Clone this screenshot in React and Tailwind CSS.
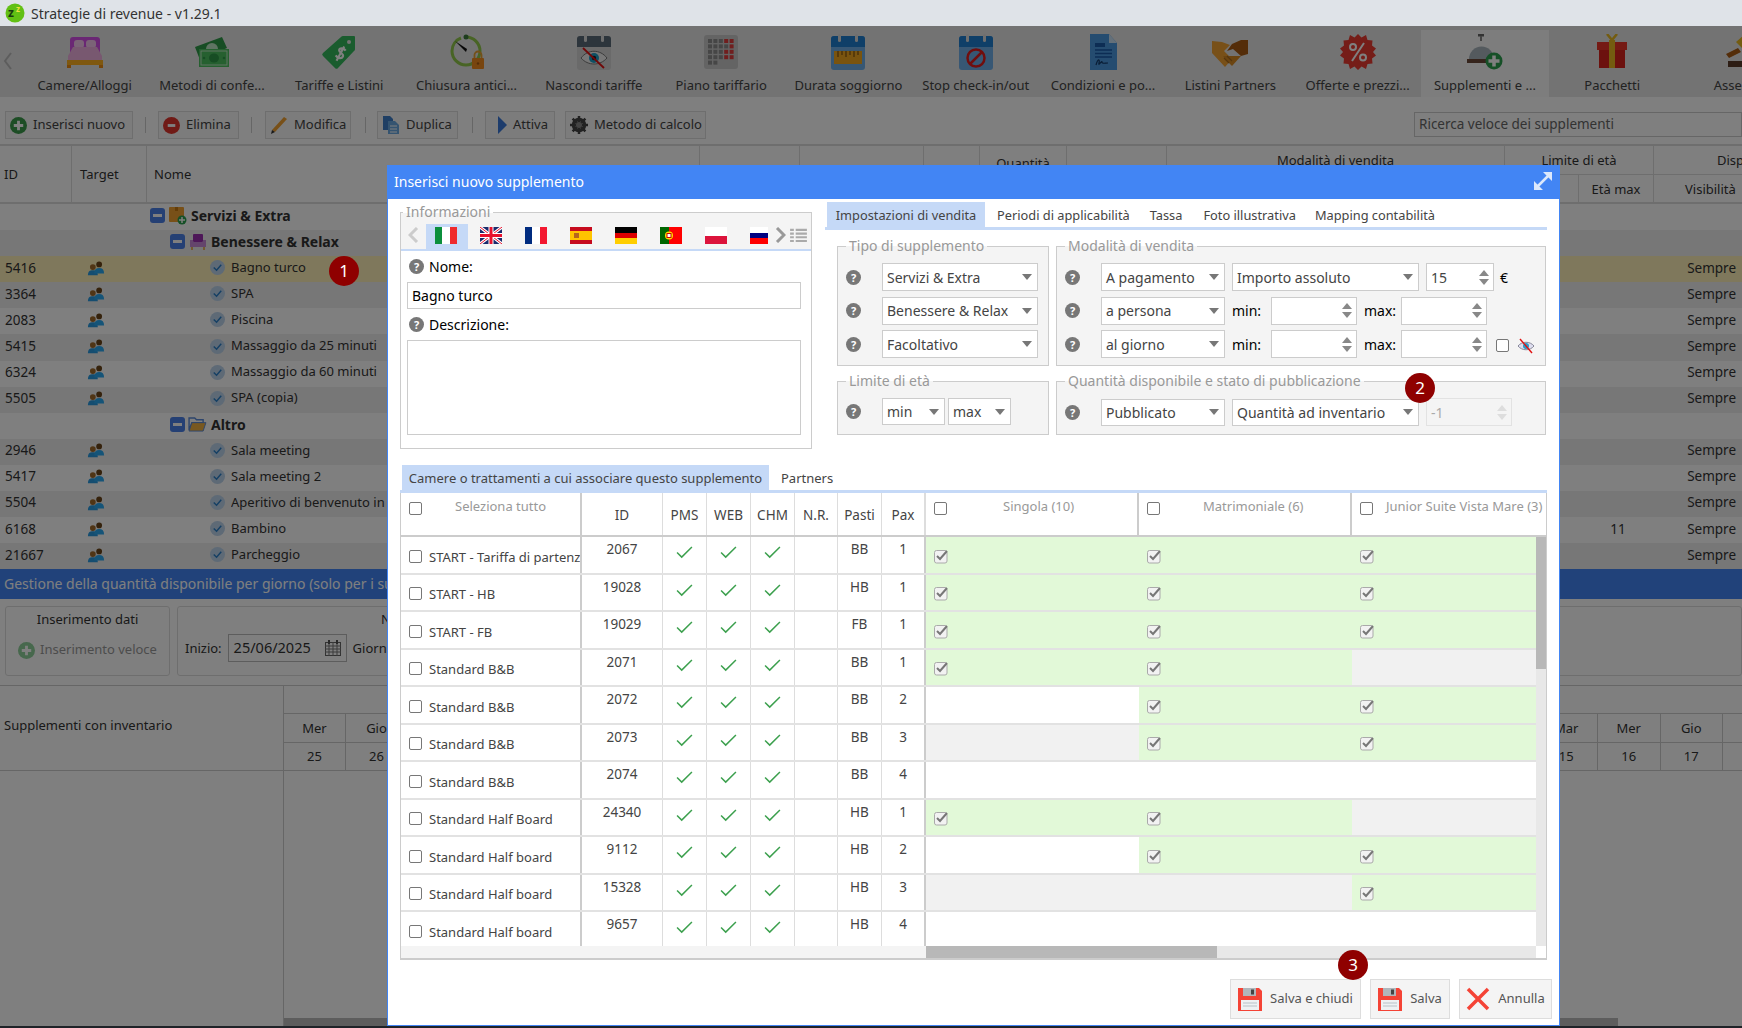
import React from 'react';

const FONT = "font-['Noto_Sans','Liberation_Sans',sans-serif]";

// toolbar icons, drawn in their real colours: the page overlay darkens them
const Bed = () => (
  <svg viewBox="0 0 36 36" className="w-9 h-9">
    <path d="M3 6a3 3 0 0 1 3-3h24a3 3 0 0 1 3 3v16H3z" fill="#d44fe8" />
    <rect x="7" y="6" width="10" height="8" rx="3" fill="#f6c6ee" />
    <rect x="19" y="6" width="10" height="8" rx="3" fill="#f6c6ee" />
    <path d="M6 13h24l5 9v6H1v-6z" fill="#f0b0e0" />
    <path d="M0 26h36v5H0z" fill="#ffb020" />
    <path d="M0 31h4v3H0zM32 31h4v3h-4z" fill="#ec8a10" />
  </svg>
);
const Money = () => (
  <svg viewBox="0 0 36 36" className="w-9 h-9">
    <path d="M1 13L28 3l5 11-27 12z" fill="#2f9a48" />
    <circle cx="18" cy="15" r="6" fill="#bfe8c6" />
    <rect x="5" y="15" width="30" height="18" fill="#4cc060" />
    <rect x="7" y="17" width="26" height="14" fill="none" stroke="#bfe8c6" strokeWidth="1" />
    <ellipse cx="20" cy="24" rx="5" ry="4.500" fill="#2f9a48" />
    <circle cx="10" cy="24" r="1.300" fill="#2f9a48" />
    <circle cx="30" cy="24" r="1.300" fill="#2f9a48" />
  </svg>
);
const Tag = () => (
  <svg viewBox="0 0 36 36" className="w-9 h-9">
    <path d="M22 2h11a1 1 0 0 1 1 1v12a2 2 0 0 1-1 2L17 34a2 2 0 0 1-3 0L2 22a2 2 0 0 1 0-3L20 3a3 3 0 0 1 2-1z" fill="#35b85c" />
    <circle cx="28" cy="8" r="2" fill="#e6e6e6" />
    <path d="M23 14c-3-2-7 0-6 2.500s6 1 6 4-4 4-7 2M20 11l-1 16" fill="none" stroke="#fff" strokeWidth="2.200" transform="rotate(25 18 19)" />
  </svg>
);
const Timer = () => (
  <svg viewBox="0 0 36 36" className="w-9 h-9">
    <path d="M17 3a14 14 0 1 1-14 14" fill="none" stroke="#90c84a" strokeWidth="3" />
    <path d="M3 17a14 14 0 0 1 9-13" fill="none" stroke="#90c84a" strokeWidth="3" />
    <circle cx="17" cy="3" r="2.500" fill="#3c7a3c" />
    <path d="M6 7l11 11 1-3z" fill="#111" />
    <rect x="23" y="24" width="12" height="11" rx="1" fill="#f08a1e" />
    <path d="M25.500 24v-3a3.500 3.500 0 0 1 7 0v3" fill="none" stroke="#e8a030" strokeWidth="1.800" />
    <circle cx="29" cy="29.500" r="1.200" fill="#a85a12" />
  </svg>
);
const CalHead = ({ color }) => (
  <>
    <path d="M1 5a3 3 0 0 1 3-3h28a3 3 0 0 1 3 3v8H1z" fill={color} />
    <rect x="8" y="0" width="3" height="8" rx="1.500" fill="#ddd" />
    <rect x="25" y="0" width="3" height="8" rx="1.500" fill="#ddd" />
  </>
);
const EyeOff = () => (
  <svg viewBox="0 0 36 36" className="w-9 h-9">
    <rect x="1" y="2" width="34" height="34" rx="3" fill="#d4d4d4" />
    <CalHead color="#5a6a78" />
    <path d="M5 24c7-9 19-9 26 0-7 8-19 8-26 0z" fill="#eee" stroke="#777" />
    <circle cx="18" cy="24" r="5" fill="#1ea0c8" />
    <circle cx="18" cy="24" r="2.200" fill="#123" />
    <path d="M7 14l21 20" stroke="#e01010" strokeWidth="1.800" />
  </svg>
);
const Grid = () => {
  const red = [3, 4, 9, 13, 14, 18, 19];
  return (
    <svg viewBox="0 0 36 36" className="w-9 h-9">
      <rect x="1" y="1" width="34" height="34" rx="3" fill="#c8c8c8" />
      {Array.from({ length: 22 }).map((_, i) => (
        <rect key={i} x={5 + (i % 5) * 5.400} y={5 + Math.floor(i / 5) * 5.400} width="4" height="4" fill={red.includes(i) ? '#e03c3c' : '#8c8c8c'} />
      ))}
    </svg>
  );
};
const CalBar = () => (
  <svg viewBox="0 0 36 36" className="w-9 h-9">
    <rect x="1" y="2" width="34" height="34" rx="3" fill="#6eaee8" />
    <CalHead color="#1f7fd0" />
    <rect x="4" y="17" width="28" height="13" fill="#f5a81e" />
    <path d="M8 17v6M12 17v4M16 17v6M20 17v4M24 17v6M28 17v4" stroke="#8a5a10" strokeWidth="1.300" />
  </svg>
);
const CalStop = () => (
  <svg viewBox="0 0 36 36" className="w-9 h-9">
    <rect x="1" y="2" width="34" height="34" rx="3" fill="#6eaee8" />
    <CalHead color="#1f7fd0" />
    <circle cx="18" cy="24" r="8.500" fill="none" stroke="#e01c1c" strokeWidth="2.500" />
    <path d="M12 30l12-12" stroke="#e01c1c" strokeWidth="2.500" />
  </svg>
);
const Doc = () => (
  <svg viewBox="0 0 36 36" className="w-9 h-9">
    <path d="M5 0h19l8 9v27H5z" fill="#4a98e0" />
    <path d="M24 0l8 9h-8z" fill="#c8e0f5" />
    <path d="M10 9h10v4H10z" fill="#1a5aa8" />
    <path d="M10 16h17M10 19.500h17M10 23h17" stroke="#1a5aa8" strokeWidth="1.600" />
    <path d="M11 31c2-7 4-6 3-2s3-3 3-1 3 1 6 1" fill="none" stroke="#123a6a" strokeWidth="1.200" />
  </svg>
);
const Hands = () => (
  <svg viewBox="0 0 36 36" className="w-9 h-9">
    <path d="M0 7l10 1 8 3-6 6 5 5 3 3-7 8-13-14z" fill="#f0a030" />
    <path d="M36 6v14l-7 2-8-7-6 2 5-7 9-4z" fill="#a85a12" />
    <path d="M29 22l-9 10-3-3-6-7" fill="#d88a22" />
    <path d="M12 24l5 5M15 22l5 5" stroke="#a86a1c" strokeWidth="1.200" />
  </svg>
);
const Percent = () => (
  <svg viewBox="0 0 36 36" className="w-9 h-9">
    <path d="M18 0l3.500 3.500L26 1l1.500 5 5 .5L32 11.500l4 3-3 3.500 3 3.500-4 3 .5 5-5 .5L26 35l-4.500-2.500L18 36l-3.500-3.500L10 35l-1.500-5-5-.5.5-5-4-3L3 18 0 14.500l4-3-.5-5 5-.5L10 1l4.500 2.500z" fill="#ea3a30" />
    <circle cx="13" cy="13" r="3" fill="none" stroke="#fff" strokeWidth="2" />
    <circle cx="23" cy="23.500" r="3" fill="none" stroke="#fff" strokeWidth="2" />
    <path d="M24 9L12 27" stroke="#fff" strokeWidth="2" />
  </svg>
);
const Bell = () => (
  <svg viewBox="0 0 36 36" className="w-9 h-9">
    <rect x="11" y="0" width="6" height="2.500" fill="#666" />
    <rect x="13" y="2" width="2" height="5" fill="#888" />
    <path d="M2 25a12.500 12.500 0 0 1 25 0z" fill="#a8b4bc" />
    <path d="M0 25h30v4H0z" fill="#6a4838" />
    <circle cx="27" cy="27" r="8.500" fill="#2ca04f" />
    <path d="M27 21.500v11M21.500 27h11" stroke="#fff" strokeWidth="3.500" />
  </svg>
);
const Gift = () => (
  <svg viewBox="0 0 36 36" className="w-9 h-9">
    <path d="M13 0l5 6 5-6" fill="none" stroke="#e8b820" strokeWidth="2.500" />
    <rect x="3" y="8" width="30" height="8" fill="#ea3428" />
    <rect x="5" y="16" width="26" height="18" fill="#d8231c" />
    <rect x="15" y="6" width="6" height="28" fill="#e8b820" />
  </svg>
);
const Gavel = () => (
  <svg viewBox="0 0 36 36" className="w-9 h-9">
    <path d="M14 8l8-7 7 7-8 7z" fill="#e8b820" />
    <path d="M4 20l12-6 3 4-12 6z" fill="#a85a12" />
    <rect x="6" y="27" width="24" height="6" fill="#5a3a28" />
  </svg>
);

const PlusRound = ({ size = 'w-[17px] h-[17px]', color = '#3a9a4a' }) => (
  <svg viewBox="0 0 18 18" className={size}>
    <circle cx="9" cy="9" r="9" fill={color} />
    <path d="M9 4v10M4 9h10" stroke="#fff" strokeWidth="3" />
  </svg>
);
const MinusRound = () => (
  <svg viewBox="0 0 18 18" className="w-[17px] h-[17px]">
    <circle cx="9" cy="9" r="9" fill="#e0342c" />
    <rect x="5" y="7.500" width="8" height="3" fill="#fff" />
  </svg>
);
const Pencil = () => (
  <svg viewBox="0 0 18 18" className="w-[18px] h-[18px]">
    <path d="M14 1l3 2L5 16l-3-2z" fill="#f0a030" />
    <path d="M2 14l3 2-4 2z" fill="#333" />
  </svg>
);
const Duplicate = () => (
  <svg viewBox="0 0 18 18" className="w-[18px] h-[18px]">
    <path d="M1 0h7l3 3v11H1z" fill="#3f7fc8" />
    <path d="M6 5h7l4 4v9H6z" fill="#6aa8e0" />
    <path d="M8 10h7M8 13h7M8 16h7" stroke="#fff" strokeWidth="1" />
  </svg>
);
const Gear = () => (
  <svg viewBox="0 0 18 18" className="w-[18px] h-[18px]">
    <circle cx="9" cy="9" r="5.500" fill="none" stroke="#444" strokeWidth="3.500" />
    <path d="M9 0v18M0 9h18M2.600 2.600l12.800 12.800M15.400 2.600L2.600 15.400" stroke="#444" strokeWidth="2.500" />
    <circle cx="9" cy="9" r="3" fill="#888" />
  </svg>
);
const Users = () => (
  <svg viewBox="0 0 20 16" className="w-[18px] h-[16px]">
    <circle cx="6.500" cy="7" r="3.200" fill="#a06a2a" />
    <path d="M1 16c0-4 2-5.500 5.500-5.500S12 12 12 16z" fill="#2a9ae0" />
    <circle cx="13.500" cy="4" r="3.200" fill="#6a4418" />
    <path d="M8 14c0-4 2-6 5.500-6S19 10 19 14z" fill="#2aa8f0" />
  </svg>
);
const RoundCheck = () => (
  <svg viewBox="0 0 16 16" className="w-[15px] h-[15px]">
    <circle cx="8" cy="8" r="8" fill="#bcd4ec" />
    <path d="M4 8l3 3 5-6" fill="none" stroke="#2a7fc8" strokeWidth="1.500" />
  </svg>
);
const TreeMinus = () => (
  <div className="w-[15px] h-[15px] rounded-[3px] bg-[#4a80e8] flex items-center justify-center">
    <div className="w-[9px] h-[3px] bg-white" />
  </div>
);
const Box = () => (
  <svg viewBox="0 0 18 18" className="w-[18px] h-[18px]">
    <rect x="0" y="0" width="15" height="15" rx="1" fill="#f0a030" />
    <rect x="6" y="0" width="3" height="4" fill="#c87a10" />
    <circle cx="13" cy="13" r="4.500" fill="#2ca04f" />
    <path d="M13 10v6M10 13h6" stroke="#fff" strokeWidth="1.500" />
  </svg>
);
const Armchair = () => (
  <svg viewBox="0 0 16 16" className="w-4 h-4">
    <rect x="3" y="0" width="10" height="8" rx="1" fill="#9a2fb0" />
    <rect x="0" y="6" width="3" height="7" fill="#c88ad8" />
    <rect x="13" y="6" width="3" height="7" fill="#c88ad8" />
    <rect x="2" y="8" width="12" height="5" fill="#c88ad8" />
    <path d="M2 13v3M14 13v3" stroke="#e8a030" strokeWidth="1.500" />
  </svg>
);
const Folder = () => (
  <svg viewBox="0 0 20 16" className="w-[19px] h-[15px]">
    <path d="M1 1h6l2 2h7v3H4L1 14z" fill="none" stroke="#5a8ad8" strokeWidth="1.500" />
    <path d="M4 6h15l-3 9H1z" fill="#f0b040" stroke="#5a8ad8" />
  </svg>
);
const Help = () => (
  <div className="w-[15px] h-[15px] shrink-0 rounded-full bg-[#777] text-white text-[11px] leading-[15px] font-bold text-center">?</div>
);
const Floppy = () => (
  <svg viewBox="0 0 24 24" className="w-6 h-6">
    <path d="M0 1h21l3 3v20H0z" fill="#f44336" />
    <rect x="5" y="1" width="13" height="8" fill="#b0b6bb" />
    <rect x="13" y="2.500" width="3" height="5" fill="#444" />
    <rect x="3" y="13" width="18" height="10" fill="#eef1f3" />
    <path d="M5 16h14M5 19h14" stroke="#b8c2c8" strokeWidth="1.200" />
  </svg>
);
const Tick = () => (
  <svg viewBox="0 0 18 14" className="w-[17px] h-[13px]">
    <path d="M1 7l5 5L17 1" fill="none" stroke="#3ca04e" strokeWidth="1.600" />
  </svg>
);
const CheckedBox = () => (
  <svg viewBox="0 0 15 15" className="w-[15px] h-[15px]">
    <rect x="0.500" y="1.500" width="12.500" height="12.500" rx="2" fill="#f2f2f2" stroke="#aaa" />
    <path d="M3 7l3 3 7-8" fill="none" stroke="#777" strokeWidth="2" />
  </svg>
);

const Spin = ({ dim }) => (
  <div className="flex flex-col gap-[3px] items-center">
    <div className={`w-0 h-0 border-x-[5px] border-x-transparent border-b-[6px] ${dim ? 'border-b-[#ddd]' : 'border-b-[#888]'}`} />
    <div className={`w-0 h-0 border-x-[5px] border-x-transparent border-t-[6px] ${dim ? 'border-t-[#ddd]' : 'border-t-[#888]'}`} />
  </div>
);
const Caret = () => <div className="w-0 h-0 border-x-[5px] border-x-transparent border-t-[6px] border-t-[#777]" />;

const Select = ({ w, h = 'h-[28px]', children }) => (
  <div className={`${w} ${h} shrink-0 bg-white border border-[#ccc] flex items-center justify-between pl-[4px] pr-[5px] text-[14px] text-[#444]`}>
    <span className="whitespace-nowrap">{children}</span>
    <Caret />
  </div>
);
const Num = ({ w, value, disabled }) => (
  <div className={`${w} h-[28px] shrink-0 border flex items-center justify-between pl-[4px] pr-[4px] text-[14px] ${disabled ? 'bg-[#f4f4f4] border-[#e2e2e2] text-[#aaa]' : 'bg-white border-[#ccc] text-[#444]'}`}>
    <span>{value}</span>
    <Spin dim={disabled} />
  </div>
);
const Box14 = () => <div className="w-[13px] h-[13px] shrink-0 rounded-[2px] border border-[#777] bg-white" />;

const Legend = ({ children, className = '' }) => <legend className={`px-[3px] text-[14px] leading-[16px] text-[#999] ${className}`}>{children}</legend>;

const Badge = ({ n, pos }) => (
  <div className={`absolute ${pos} w-[30px] h-[30px] rounded-full bg-[#8f0000] text-white text-[17px] leading-[30px] text-center z-30`}>{n}</div>
);

const tools = [
  ['Camere/Alloggi', Bed], ['Metodi di confe...', Money], ['Tariffe e Listini', Tag], ['Chiusura antici...', Timer],
  ['Nascondi tariffe', EyeOff], ['Piano tariffario', Grid], ['Durata soggiorno', CalBar], ['Stop check-in/out', CalStop],
  ['Condizioni e po...', Doc], ['Listini Partners', Hands], ['Offerte e prezzi...', Percent], ['Supplementi e ...', Bell, true],
  ['Pacchetti', Gift], ['Assegna', Gavel],
];

const rows = [
  { group: 'Servizi & Extra', level: 1 },
  { group: 'Benessere & Relax', level: 2 },
  { id: '5416', name: 'Bagno turco', hl: true },
  { id: '3364', name: 'SPA' },
  { id: '2083', name: 'Piscina' },
  { id: '5415', name: 'Massaggio da 25 minuti' },
  { id: '6324', name: 'Massaggio da 60 minuti' },
  { id: '5505', name: 'SPA (copia)' },
  { group: 'Altro', level: 3 },
  { id: '2946', name: 'Sala meeting' },
  { id: '5417', name: 'Sala meeting 2' },
  { id: '5504', name: 'Aperitivo di benvenuto in camera' },
  { id: '6168', name: 'Bambino', max: '11' },
  { id: '21667', name: 'Parcheggio' },
];

const flags = [
  <div key="it" className="flex w-[22px] h-[17px]"><div className="flex-1 bg-[#0b8f3c]" /><div className="flex-1 bg-white" /><div className="flex-1 bg-[#ef2a2d]" /></div>,
  <svg key="uk" viewBox="0 0 22 17" className="w-[22px] h-[17px]">
    <rect width="22" height="17" fill="#1a2a6c" />
    <path d="M0 0l22 17M22 0L0 17" stroke="#fff" strokeWidth="3" />
    <path d="M0 0l22 17M22 0L0 17" stroke="#e8112d" strokeWidth="1" />
    <path d="M11 0v17M0 8.500h22" stroke="#fff" strokeWidth="5" />
    <path d="M11 0v17M0 8.500h22" stroke="#e8112d" strokeWidth="3" />
  </svg>,
  <div key="fr" className="flex w-[22px] h-[17px]"><div className="flex-1 bg-[#002b7f]" /><div className="flex-1 bg-white" /><div className="flex-1 bg-[#f31830]" /></div>,
  <div key="es" className="flex flex-col w-[22px] h-[17px]"><div className="h-1 bg-[#c60b1e]" /><div className="flex-1 bg-[#ffc400] pl-1 pt-[2px]"><div className="w-[5px] h-[5px] bg-[#b5651d]" /></div><div className="h-1 bg-[#c60b1e]" /></div>,
  <div key="de" className="flex flex-col w-[22px] h-[17px]"><div className="flex-1 bg-black" /><div className="flex-1 bg-[#dd0000]" /><div className="flex-1 bg-[#ffce00]" /></div>,
  <svg key="pt" viewBox="0 0 22 17" className="w-[22px] h-[17px]">
    <rect width="9" height="17" fill="#006600" />
    <rect x="9" width="13" height="17" fill="#ff0000" />
    <circle cx="9" cy="8.500" r="4" fill="#ffe000" />
    <rect x="7" y="6.500" width="4" height="4" fill="#fff" stroke="#c00" />
  </svg>,
  <div key="pl" className="flex flex-col w-[22px] h-[17px]"><div className="flex-1 bg-white" /><div className="flex-1 bg-[#dc143c]" /></div>,
  <div key="ru" className="flex flex-col w-[18px] h-[17px]"><div className="flex-1 bg-white" /><div className="flex-1 bg-[#000080]" /><div className="flex-1 bg-[#ff0000]" /></div>,
];

const rooms = [
  ['START - Tariffa di partenza', '2067', 'BB', '1', true, true, true],
  ['START - HB', '19028', 'HB', '1', true, true, true],
  ['START - FB', '19029', 'FB', '1', true, true, true],
  ['Standard B&B', '2071', 'BB', '1', true, true, false],
  ['Standard B&B', '2072', 'BB', '2', false, true, true],
  ['Standard B&B', '2073', 'BB', '3', false, true, true],
  ['Standard B&B', '2074', 'BB', '4', false, false, false],
  ['Standard Half Board', '24340', 'HB', '1', true, true, false],
  ['Standard Half board', '9112', 'HB', '2', false, true, true],
  ['Standard Half board', '15328', 'HB', '3', false, false, true],
  ['Standard Half board', '9657', 'HB', '4', false, false, false],
];

const roomCols = 'grid grid-cols-[181px_81px_44px_44px_44px_43px_44px_44px_213px_213px_185px]';

const Page = () => (
  <div className="h-[1000px] bg-white text-[#333] text-[13px] flex flex-col overflow-hidden">
    <div className="h-[71px] shrink-0 bg-[#e6e6e6] flex pl-[3px] pt-1 overflow-hidden">
      <svg viewBox="0 0 10 18" className="w-[10px] h-[18px] mt-[22px] mr-[8px] shrink-0"><path d="M8 1L2 9l6 8" fill="none" stroke="#bbb" strokeWidth="2" /></svg>
      {tools.map(([label, Icon, active]) => (
        <div key={label} className={`w-[127.300px] shrink-0 flex flex-col items-center pt-1 ${active ? 'bg-[#fafafa]' : ''}`}>
          <Icon />
          <div className="mt-[6px] text-[13px] leading-[18px] whitespace-nowrap text-[#444]">{label}</div>
        </div>
      ))}
    </div>
    <div className="h-[49px] shrink-0 flex items-start pl-[5px] pt-[14px] gap-[12px] border-b-2 border-[#ddd]">
      <ActionBtn w="w-[128px]" icon={<PlusRound />} label="Inserisci nuovo" />
      <div className="w-px h-[16px] mt-[6px] bg-[#ccc]" />
      <ActionBtn w="w-[81px]" icon={<MinusRound />} label="Elimina" />
      <div className="w-px h-[16px] mt-[6px] bg-[#ccc]" />
      <ActionBtn w="w-[86px]" icon={<Pencil />} label="Modifica" className="ml-[1px]" />
      <div className="w-px h-[16px] mt-[6px] bg-[#ccc] ml-[2px]" />
      <ActionBtn w="w-[81px]" icon={<Duplicate />} label="Duplica" className="-ml-[1px]" />
      <div className="w-px h-[16px] mt-[6px] bg-[#ccc] ml-[2px]" />
      <ActionBtn w="w-[70px]" icon={<div className="w-0 h-0 ml-2 border-y-[9px] border-y-transparent border-l-[9px] border-l-[#3a78d8]" />} label="Attiva" />
      <ActionBtn w="w-[141px]" icon={<Gear />} label="Metodo di calcolo" className="-ml-[2px]" />
      <div className="ml-auto w-[328px] h-[25px] mt-[1px] border border-[#ccc] bg-white pl-1 text-[13.500px] leading-[23px] text-[#666] whitespace-nowrap overflow-hidden">Ricerca veloce dei supplementi</div>
    </div>
    <div className="h-[58px] shrink-0 grid grid-cols-[72px_75px_553px_100px_124px_56px_87px_100px_338px_74px_75px_88px] border-b-2 border-[#ddd] text-[13px]">
      <div className="pl-1 flex items-center border-r border-[#ddd]">ID</div>
      <div className="pl-2 flex items-center border-r border-[#ddd]">Target</div>
      <div className="pl-[7px] flex items-center border-r border-[#ddd]">Nome</div>
      <div className="border-r border-[#ddd]" />
      <div className="border-r border-[#ddd]" />
      <div className="border-r border-[#ddd]" />
      <div className="border-r border-[#ddd] text-center pt-[8px] leading-[18px]">Quantità</div>
      <div className="border-r border-[#ddd]" />
      <div className="border-r border-[#ddd] text-center pt-[5px] leading-[18px]">Modalità di vendita</div>
      <div className="col-span-2 border-r border-[#ddd] flex flex-col">
        <div className="h-[29px] text-center leading-[28px] border-b border-[#ddd]">Limite di età</div>
        <div className="flex-1 flex">
          <div className="w-[74px] border-r border-[#ddd]" />
          <div className="flex-1 text-center leading-[28px]">Età max</div>
        </div>
      </div>
      <div className="flex flex-col">
        <div className="h-[29px] pl-[63px] leading-[28px] border-b border-[#ddd] whitespace-nowrap overflow-hidden">Disponibilità</div>
        <div className="flex-1 pl-[31px] leading-[28px]">Visibilità</div>
      </div>
    </div>
    <div>
      {rows.map((r, i) => (
        <div key={i} className={`h-[26.100px] flex items-center pb-[3px] text-[13px] ${r.hl ? 'bg-[#fef0b8]' : i % 2 ? 'bg-[#eeeeee]' : 'bg-white'}`}>
          {r.group ? (
            <div className={`flex items-center font-bold text-[14px] ${r.level === 1 ? 'ml-[150px]' : 'ml-[170px]'}`}>
              <TreeMinus />
              <div className={`flex justify-center ${r.level === 1 ? 'ml-[4px] w-[18px] mr-[4px]' : 'ml-[3px] w-[19px] mr-[4px]'}`}>
                {r.level === 1 ? <Box /> : r.level === 2 ? <Armchair /> : <Folder />}
              </div>
              <span>{r.group}</span>
            </div>
          ) : (
            <>
              <div className="w-[87px] pl-[5px] text-[13.500px]">{r.id}</div>
              <Users />
              <div className="ml-[105px] mr-[6px]"><RoundCheck /></div>
              <div className="whitespace-nowrap w-[300px] overflow-hidden">{r.name}</div>
              <div className="ml-[1049px] w-[76px] text-center text-[13.500px]">{r.max}</div>
              <div className="ml-auto pr-[6px] text-[13.500px]">Sempre</div>
            </>
          )}
        </div>
      ))}
    </div>
    <div className="h-[30px] shrink-0 bg-[#4285f4] text-white text-[14px] leading-[30px] pl-1 whitespace-nowrap">Gestione della quantità disponibile per giorno (solo per i supplementi con inventario)</div>
    <div className="h-[86px] shrink-0 flex gap-[7px] pl-[5px] pt-[7px]">
      <div className="w-[165px] h-[70px] border border-[#ddd] rounded-[3px] flex flex-col items-center">
        <div className="mt-[2px] leading-[20px] text-[#333]">Inserimento dati</div>
        <div className="mt-[11px] flex items-center gap-[5px] text-[#999]"><PlusRound color="#8fd09a" />Inserimento veloce</div>
      </div>
      <div className="flex-1 h-[70px] border border-[#ddd] rounded-[3px] pl-[7px]">
        <div className="mt-[2px] leading-[20px] pl-[196px]">Nuova</div>
        <div className="mt-[5px] flex items-center gap-[6px]">
          Inizio:
          <div className="w-[119px] h-[28px] border border-[#bbb] flex items-center justify-between px-[5px] text-[14.500px]">
            25/06/2025
            <svg viewBox="0 0 16 16" className="w-4 h-4"><rect x="0.500" y="2.500" width="15" height="13" fill="none" stroke="#666" /><path d="M0 6h16M0 9h16M0 12h16M4 2v14M8 2v14M12 2v14" stroke="#777" /><path d="M4 0v4M12 0v4" stroke="#555" strokeWidth="2" /></svg>
          </div>
          <span>Giorni</span>
        </div>
      </div>
    </div>
    <div className="flex flex-1 min-h-0 border-t border-[#ccc]">
      <div className="w-[284px] shrink-0 border-r border-[#ccc]">
        <div className="h-[85px] flex items-center pl-1 pb-[6px] border-b border-[#ccc]">Supplementi con inventario</div>
      </div>
      <div className="flex-1 flex flex-col">
        <div className="h-[28px] border-b border-[#ccc]" />
        <div className="flex h-[29px] border-b border-[#ccc]">
          {['Mer', 'Gio'].map((d) => <div key={d} className="w-[62px] text-center leading-[28px] border-r border-[#ccc]">{d}</div>)}
          <div className="ml-auto flex">
            {['Mar', 'Mer', 'Gio'].map((d) => <div key={d} className="w-[62.500px] text-center leading-[28px] border-l border-[#ccc]">{d}</div>)}
            <div className="w-5 border-l border-[#ccc]" />
          </div>
        </div>
        <div className="flex h-[28px] border-b border-[#ccc]">
          {['25', '26'].map((d) => <div key={d} className="w-[62px] text-center leading-[27px] border-r border-[#ccc]">{d}</div>)}
          <div className="ml-auto flex">
            {['15', '16', '17'].map((d) => <div key={d} className="w-[62.500px] text-center leading-[27px] border-l border-[#ccc]">{d}</div>)}
            <div className="w-5 border-l border-[#ccc]" />
          </div>
        </div>
        <div className="mt-auto h-[8px] bg-[#bbb] w-[1334px]" />
      </div>
    </div>
  </div>
);

function ActionBtn({ w, icon, label, className = '' }) {
  return (
    <div className={`${w} ${className} h-[28px] shrink-0 border border-[#ddd] bg-[#f8f8f8] flex items-center gap-[6px] pl-[4px] text-[13px] text-[#444] whitespace-nowrap`}>
      {icon}
      {label}
    </div>
  );
}

const Modal = () => (
  <div className="absolute left-[387px] top-[165px] w-[1173px] h-[861px] z-20 bg-white border-x border-b border-[#4285f4] flex flex-col">
    <div className="h-[34px] shrink-0 bg-[#4285f4] -mx-px flex items-center justify-between pl-[7px] pr-[7px] pb-[2px] text-white text-[14px]">
      Inserisci nuovo supplemento
      <svg viewBox="0 0 20 20" className="w-5 h-5">
        <path d="M4 16L16 4" stroke="#dce8fb" strokeWidth="2.500" />
        <path d="M10 1h9v9zM1 10v9h9z" fill="#dce8fb" />
      </svg>
    </div>

    <div className="flex pl-[12px] pt-[3px] h-[266px] shrink-0">
      <fieldset className="w-[412px] h-[245px] mt-[2px] shrink-0 border border-[#ccc] text-[14px]">
        <Legend className="ml-[2px]">Informazioni</Legend>
        <div className="h-[38px] -mt-[7px] bg-[#f4f4f4] border-b-2 border-[#c5d9f7] flex items-start pl-[7px]">
          <div className="w-[11px] mt-[14px]">
            <svg viewBox="0 0 11 16" className="w-[11px] h-4"><path d="M9 1L2 8l7 7" fill="none" stroke="#ccc" strokeWidth="3" /></svg>
          </div>
          <div className="flex ml-[7px] overflow-hidden w-[349px] mt-[11px]">
            {flags.map((f, i) => (
              <div key={i} className={`pt-[3px] pl-[9px] h-[26px] shrink-0 flex ${i === 0 ? 'bg-[#c5d9f7] w-[42px] mr-[3px]' : 'w-[45px]'}`}>{f}</div>
            ))}
          </div>
          <div className="w-[11px] mt-[14px]">
            <svg viewBox="0 0 11 16" className="w-[11px] h-4"><path d="M2 1l7 7-7 7" fill="none" stroke="#999" strokeWidth="3" /></svg>
          </div>
          <svg viewBox="0 0 18 15" className="w-[17px] h-[14px] mt-[15px] ml-[4px]"><path d="M0 2h4M6 2h12M0 6h4M6 6h12M0 10h4M6 10h12M0 14h4M6 14h12" stroke="#aaa" strokeWidth="2.200" /></svg>
        </div>
        <div className="pl-[6px] pr-[10px]">
          <div className="flex items-center gap-[5px] h-[31px] pl-[2px] text-[14px]"><Help />Nome:</div>
          <div className="h-[27px] border border-[#ccc] pl-[4px] leading-[25px] text-[14px]">Bagno turco</div>
          <div className="flex items-center gap-[5px] h-[31px] pl-[2px] text-[14px]"><Help />Descrizione:</div>
          <div className="h-[95px] border border-[#ccc]" />
        </div>
      </fieldset>

      <div className="ml-[13px] w-[722px] shrink-0">
        <div className="h-[28px] border-b-[3px] border-[#c5d9f7] flex pl-[2px] text-[12.800px] text-[#444]">
          <div className="w-[158px] h-[25px] bg-[#c5d9f7] text-center leading-[27px]">Impostazioni di vendita</div>
          <div className="ml-[12px] leading-[27px]">Periodi di applicabilità</div>
          <div className="ml-[20px] leading-[27px]">Tassa</div>
          <div className="ml-[21px] leading-[27px]">Foto illustrativa</div>
          <div className="ml-[19px] leading-[27px]">Mapping contabilità</div>
        </div>
        <div className="pl-[12px] mt-[8px] grid grid-cols-[212px_490px] gap-x-[7px] gap-y-[7px]">
          <fieldset className="h-[128px] border border-[#ccc] bg-[#f4f4f4] pl-[8px] flex flex-col">
            <Legend>Tipo di supplemento</Legend>
            <div className="grid grid-cols-[36px_156px] gap-y-[5.500px] pt-[9px] items-center">
              <Help /><Select w="w-[156px]">Servizi &amp; Extra</Select>
              <Help /><Select w="w-[156px]">Benessere &amp; Relax</Select>
              <Help /><Select w="w-[156px]">Facoltativo</Select>
            </div>
          </fieldset>
          <fieldset className="h-[128px] border border-[#ccc] bg-[#f4f4f4] pl-[8px]">
            <Legend>Modalità di vendita</Legend>
            <div className="flex flex-col gap-[5.500px] pt-[9px]">
              <div className="flex items-center">
                <div className="w-[36px]"><Help /></div>
                <Select w="w-[124px]">A pagamento</Select>
                <div className="w-[7px]" />
                <Select w="w-[187px]">Importo assoluto</Select>
                <div className="w-[7px]" />
                <Num w="w-[68px]" value="15" />
                <span className="ml-[6px] text-[14px]">€</span>
              </div>
              <div className="flex items-center text-[14px]">
                <div className="w-[36px]"><Help /></div>
                <Select w="w-[124px]">a persona</Select>
                <span className="w-[46px] pl-[7px]">min:</span>
                <Num w="w-[86px]" />
                <span className="w-[44px] pl-[7px]">max:</span>
                <Num w="w-[86px]" />
              </div>
              <div className="flex items-center text-[14px]">
                <div className="w-[36px]"><Help /></div>
                <Select w="w-[124px]">al giorno</Select>
                <span className="w-[46px] pl-[7px]">min:</span>
                <Num w="w-[86px]" />
                <span className="w-[44px] pl-[7px]">max:</span>
                <Num w="w-[86px]" />
                <div className="ml-[9px] mt-[3px]"><Box14 /></div>
                <svg viewBox="0 0 18 16" className="ml-[8px] mt-[3px] w-[18px] h-4">
                  <path d="M1 8c4-5 12-5 16 0-4 5-12 5-16 0z" fill="#dde" stroke="#889" />
                  <circle cx="9" cy="8" r="3" fill="#2a9ac8" />
                  <path d="M3 1l12 14" stroke="#e01010" strokeWidth="1.400" />
                </svg>
              </div>
            </div>
          </fieldset>
          <fieldset className="h-[62px] border border-[#ccc] bg-[#f4f4f4] pl-[8px]">
            <Legend>Limite di età</Legend>
            <div className="flex items-center pt-[9px]">
              <div className="w-[36px]"><Help /></div>
              <Select w="w-[63px]" h="h-[27px]">min</Select>
              <div className="w-[3px]" />
              <Select w="w-[63px]" h="h-[27px]">max</Select>
            </div>
          </fieldset>
          <fieldset className="h-[62px] border border-[#ccc] bg-[#f4f4f4] pl-[8px]">
            <Legend>Quantità disponibile e stato di pubblicazione</Legend>
            <div className="flex items-center pt-[9px]">
              <div className="w-[36px]"><Help /></div>
              <Select w="w-[124px]" h="h-[27px]">Pubblicato</Select>
              <div className="w-[7px]" />
              <Select w="w-[187px]" h="h-[27px]">Quantità ad inventario</Select>
              <div className="w-[7px]" />
              <Num w="w-[86px]" value="-1" disabled />
            </div>
          </fieldset>
        </div>
      </div>
    </div>

    <div className="ml-[12px] w-[1147px] shrink-0 border-b-2 border-[#ccc]">
      <div className="h-[28px] border-b-[3px] border-[#c5d9f7] flex text-[13px] text-[#444] pl-[2px]">
        <div className="w-[367px] h-[25px] bg-[#c5d9f7] text-center leading-[27px]">Camere o trattamenti a cui associare questo supplemento</div>
        <div className="ml-[12px] leading-[27px]">Partners</div>
      </div>
      <div className="border-x border-[#ccc] relative h-[465px] overflow-hidden">
        <div className={`${roomCols} h-[44px] border-b-2 border-[#ccc] text-[13.500px] text-[#444]`}>
          <div className="border-r-2 border-[#ccc] flex pl-[8px] pt-[4px] gap-[33px] text-[#999] text-[13px]"><div className="mt-[5px]"><Box14 /></div>Seleziona tutto</div>
          {['ID', 'PMS', 'WEB', 'CHM', 'N.R.', 'Pasti', 'Pax'].map((h, i) => (
            <div key={h} className={`flex items-center justify-center pt-[3px] border-[#ddd] ${i === 6 ? 'border-r-2 border-[#ccc]' : 'border-r'}`}>{h}</div>
          ))}
          {['Singola (10)', 'Matrimoniale (6)', 'Junior Suite Vista Mare (3)'].map((h, i) => (
            <div key={h} className={`flex pl-[8px] pt-[4px] text-[#999] text-[13px] whitespace-nowrap ${i < 2 ? 'border-r-2 border-[#ccc]' : ''} ${i === 2 ? 'gap-[13px]' : i === 1 ? 'gap-[43px]' : 'gap-[56px]'}`}><div className="mt-[5px]"><Box14 /></div>{h}</div>
          ))}
        </div>
        {rooms.map((r, i) => (
          <div key={i} className={`${roomCols} h-[37.500px] border-b-2 border-[#e2e2e2] text-[13.500px] text-[#444]`}>
            <div className="border-r-2 border-[#ccc] flex items-center pl-[8px] gap-[7px] whitespace-nowrap overflow-hidden pt-[3px] text-[13px]"><Box14 /><span className="mt-[2px]">{r[0]}</span></div>
            <div className="border-r border-[#ddd] text-center pt-[2px]">{r[1]}</div>
            {[0, 1, 2].map((c) => <div key={c} className="border-r border-[#ddd] flex justify-center pt-[9px]"><Tick /></div>)}
            <div className="border-r border-[#ddd]" />
            <div className="border-r border-[#ddd] text-center pt-[2px]">{r[2]}</div>
            <div className="border-r-2 border-[#ccc] text-center pt-[2px]">{r[3]}</div>
            {[4, 5, 6].map((c) => (
              <div key={c} className={`pl-[8px] pt-[3px] flex items-center ${r[c] ? 'bg-[#e2f9d8]' : i % 2 ? 'bg-[#f1f1f1]' : 'bg-white'}`}>{r[c] && <CheckedBox />}</div>
            ))}
          </div>
        ))}
        <div className="absolute right-0 top-[44px] bottom-0 w-[10px] bg-white z-10">
          <div className="h-[409px] bg-[#e8e8e8]"><div className="h-[132px] bg-[#b8b8b8]" /></div>
        </div>
        <div className="absolute left-[525px] right-[10px] bottom-0 h-[12px] bg-[#e8e8e8] z-10"><div className="w-[291px] h-full bg-[#b8b8b8]" /></div>
        <div className="absolute left-0 bottom-0 w-[525px] h-[12px] bg-[#f4f4f4] z-10" />
      </div>
    </div>

    <div className="flex justify-end gap-[9px] pr-[7px] pt-[19px] text-[13px] text-[#555]">
      <FootBtn w="w-[131px]" icon={<Floppy />} label="Salva e chiudi" />
      <FootBtn w="w-[80px]" icon={<Floppy />} label="Salva" />
      <FootBtn w="w-[93px]" icon={<svg viewBox="0 0 24 24" className="w-6 h-6"><path d="M2 2l20 20M22 2L2 22" stroke="#f44336" strokeWidth="3.500" /></svg>} label="Annulla" />
    </div>
  </div>
);

function FootBtn({ w, icon, label }) {
  return (
    <div className={`${w} h-[40px] border border-[#ddd] bg-[#f4f4f4] flex items-center justify-center gap-[8px] whitespace-nowrap`}>
      {icon}
      {label}
    </div>
  );
}

export default function App() {
  return (
    <div className={`relative w-[1742px] h-[1028px] overflow-hidden bg-[#1f2328] ${FONT}`}>
      <div className="h-[26px] bg-[#dfe3e8] flex items-center pl-[5px] gap-[6px] text-[14px] text-[#333]">
        <svg viewBox="0 0 20 20" className="w-5 h-5">
          <circle cx="10" cy="10" r="9.500" fill="#62c014" />
          <text x="3" y="14" fontSize="12" fontWeight="700" fill="#1a3a10">z</text>
          <text x="11" y="9" fontSize="8" fontWeight="700" fill="#f0e040">z</text>
        </svg>
        Strategie di revenue - v1.29.1
      </div>
      <div className="relative h-[1000px] overflow-hidden">
        <Page />
        <div className="absolute inset-0 bg-black/50" />
      </div>
      <Modal />
      <Badge n="1" pos="left-[329px] top-[256px]" />
      <Badge n="2" pos="left-[1405px] top-[373px]" />
      <Badge n="3" pos="left-[1338px] top-[950px]" />
    </div>
  );
}
